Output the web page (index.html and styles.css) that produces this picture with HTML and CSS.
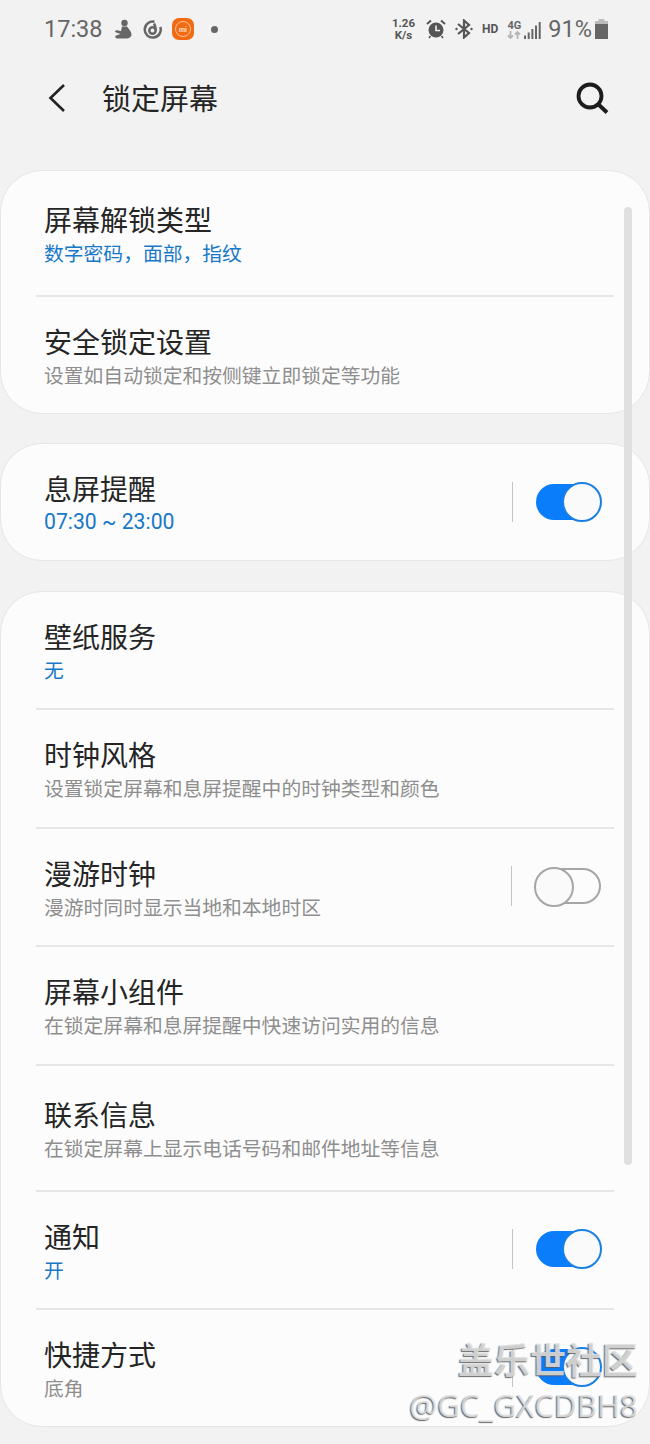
FILE: index.html
```html
<!DOCTYPE html>
<html lang="zh-CN">
<head>
  <meta charset="UTF-8" />
  <title>锁定屏幕</title>
  <meta name="viewport" content="width=device-width, initial-scale=1.0" />
  <link rel="stylesheet" href="styles.css">
</head>
<body>

  <!-- status bar -->
  <div class="status">
    <div class="status-left">
      <span class="clock">17:38</span>
      <svg class="ic-man" width="18" height="20" viewBox="0 0 18 20"><circle cx="10.500" cy="4" r="3.200" fill="#666"/><path d="M8 7.500 L13 7.500 C15 10.500 17.500 12.500 17.500 15.500 C17.500 18 15 19.500 12 19.500 L2.500 19.500 C1 18.500 1 17 2 16.500 L6.500 15 L1 13 C1 11.500 2.500 11 4 11.500 L7 12 Z" fill="#666"/></svg>
      <svg class="ic-swirl" width="19" height="19" viewBox="0 0 19 19" fill="none" stroke="#666" stroke-width="2.500"><path d="M11.500 1.800 A8 8 0 1 0 17.300 7"/><circle cx="9.500" cy="10.500" r="3.200"/><path d="M12.700 10.500 C12.700 7 12 5 11 3.500"/></svg>
      <svg class="ic-mi" width="22" height="22" viewBox="0 0 22 22"><rect width="22" height="22" rx="7" fill="#f26a12"/><circle cx="11" cy="11" r="7.500" fill="none" stroke="#f9c39b" stroke-width="1"/><text x="11" y="13.500" text-anchor="middle" class="mi-text">mi</text></svg>
      <span class="dot"></span>
    </div>
    <div class="status-right">
      <span class="speed">1.26<br>K/s</span>
      <svg class="ic-alarm" width="20" height="20" viewBox="0 0 20 20"><circle cx="10" cy="11" r="7.500" fill="#555"/><path d="M10 6.500 V11.500 H14" fill="none" stroke="#f2f2f2" stroke-width="1.600"/><path d="M1 5 L5 1.500 M19 5 L15 1.500" stroke="#555" stroke-width="2"/><path d="M4.500 17 L3 19 M15.500 17 L17 19" stroke="#555" stroke-width="1.600"/></svg>
      <svg class="ic-bt" width="18" height="20" viewBox="0 0 18 20" fill="none" stroke="#555" stroke-width="2.200"><path d="M3 5 L14 14 L9 18.500 V1.500 L14 6 L3 15"/><circle cx="1.500" cy="10" r="1.200" fill="#555" stroke="none"/><circle cx="16.500" cy="10" r="1.200" fill="#555" stroke="none"/></svg>
      <span class="hd">HD</span>
      <span class="net">4G<svg width="14" height="8" viewBox="0 0 14 8" fill="none" stroke-width="1.800"><path d="M3.500 0 V7 M1 4.500 L3.500 7 L6 4.500" stroke="#b5b5b5"/><path d="M10.500 8 V1 M8 3.500 L10.500 1 L13 3.500" stroke="#b5b5b5"/></svg></span>
      <svg class="ic-signal" width="17" height="17" viewBox="0 0 17 17" fill="#666"><rect x="0" y="13.500" width="2" height="3.500"/><rect x="3.700" y="10.500" width="2" height="6.500"/><rect x="7.400" y="7" width="2" height="10"/><rect x="11" y="3.500" width="2" height="13.500"/><rect x="14.700" y="0" width="2" height="17"/></svg>
      <span class="pct">91%</span>
      <svg class="ic-batt" width="13" height="20" viewBox="0 0 13 20"><rect x="3.500" y="0" width="6" height="2" fill="#bbb"/><rect x="0" y="2" width="13" height="4" fill="#bbb"/><rect x="0" y="5" width="13" height="15" fill="#666"/></svg>
    </div>
  </div>

  <!-- header -->
  <div class="appbar">
    <svg class="back" width="20" height="30" viewBox="0 0 20 30" fill="none" stroke="#222" stroke-width="2.600"><path d="M17 2 L3.500 15 L17 28"/></svg>
    <span class="appbar-title">锁定屏幕</span>
    <svg class="search" width="34" height="34" viewBox="0 0 34 34" fill="none" stroke="#1c1c1c" stroke-width="3.800"><circle cx="15" cy="15" r="11.500"/><path d="M23.500 23.500 L32 31.500"/></svg>
  </div>

  <div class="card card-first">
    <div class="row h-126">
      <div class="row-text">
        <div class="t">屏幕解锁类型</div>
        <div class="s blue">数字密码，面部，指纹</div>
      </div>
    </div>
    <div class="row row-last h-116">
      <div class="row-text">
        <div class="t">安全锁定设置</div>
        <div class="s">设置如自动锁定和按侧键立即锁定等功能</div>
      </div>
    </div>
  </div>

  <div class="card card-single">
    <div class="row row-last h-116">
      <div class="row-text">
        <div class="t">息屏提醒</div>
        <div class="s blue time">07:30 ~ 23:00</div>
      </div>
      <span class="vline"></span>
      <span class="toggle on"></span>
    </div>
  </div>

  <div class="card">
    <div class="row">
      <div class="row-text">
        <div class="t">壁纸服务</div>
        <div class="s blue">无</div>
      </div>
    </div>
    <div class="row h-119">
      <div class="row-text">
        <div class="t">时钟风格</div>
        <div class="s">设置锁定屏幕和息屏提醒中的时钟类型和颜色</div>
      </div>
    </div>
    <div class="row">
      <div class="row-text">
        <div class="t">漫游时钟</div>
        <div class="s">漫游时同时显示当地和本地时区</div>
      </div>
      <span class="vline"></span>
      <span class="toggle"></span>
    </div>
    <div class="row h-119">
      <div class="row-text">
        <div class="t">屏幕小组件</div>
        <div class="s">在锁定屏幕和息屏提醒中快速访问实用的信息</div>
      </div>
    </div>
    <div class="row h-126">
      <div class="row-text">
        <div class="t">联系信息</div>
        <div class="s">在锁定屏幕上显示电话号码和邮件地址等信息</div>
      </div>
    </div>
    <div class="row">
      <div class="row-text">
        <div class="t">通知</div>
        <div class="s blue">开</div>
      </div>
      <span class="vline"></span>
      <span class="toggle on"></span>
    </div>
    <div class="row row-last h-116">
      <div class="row-text">
        <div class="t">快捷方式</div>
        <div class="s">底角</div>
      </div>
      <span class="vline"></span>
      <span class="toggle on"></span>
    </div>
  </div>

  <div class="scrollbar"></div>

  <div class="watermark">
    <div class="wm-cn">盖乐世社区</div>
    <div class="wm-id">@GC_GXCDBH8</div>
  </div>

</body>
</html>
```

FILE: styles.css
```css
html, body {
  margin: 0;
  padding: 0;
}

body {
  position: relative;
  width: 650px;
  height: 1444px;
  overflow: hidden;
  background-color: #f2f2f2;
  color: #252525;
  font-family: "Noto Sans CJK SC", "Noto Sans", sans-serif;
}

/* status bar */
.status {
  display: flex;
  justify-content: space-between;
  align-items: center;
  height: 58px;
  padding: 0 42px 0 44px;
  color: #666;
  font-family: Roboto, sans-serif;
}

.status-left,
.status-right {
  display: flex;
  align-items: center;
}

.clock {
  font-size: 23.500px;
  margin-right: 11px;
}

.ic-swirl { margin-left: 11px; }
.ic-mi { margin-left: 10px; }

.mi-text {
  font-family: Roboto, sans-serif;
  font-size: 7px;
  font-weight: 700;
  fill: #fbe3d0;
}

.dot {
  width: 7px;
  height: 7px;
  margin-left: 17px;
  border-radius: 50%;
  background: #666;
}

.speed {
  margin-right: 2px;
  font-size: 11.500px;
  font-weight: 700;
  line-height: 12px;
  text-align: center;
  color: #555;
}

.ic-alarm { margin-left: 9px; }
.ic-bt { margin-left: 9px; }

.hd {
  margin-left: 9px;
  font-size: 12px;
  font-weight: 700;
  color: #555;
}

.net {
  display: flex;
  flex-direction: column;
  align-items: center;
  margin-left: 9px;
  font-size: 11px;
  font-weight: 700;
  line-height: 11px;
  color: #666;
}

.ic-signal { margin: 3px 0 0 3px; }

.pct {
  margin-left: 7px;
  font-size: 23.500px;
}

.ic-batt { margin-left: 3px; }

/* header */
.appbar {
  display: flex;
  align-items: center;
  height: 80px;
  padding: 0 41px 0 47px;
}

.appbar-title {
  flex: 1;
  margin: -2px 0 0 35px;
  font-size: 29px;
}

.back,
.search {
  flex: none;
}

/* cards */
.card {
  margin-bottom: 30px;
  border: 1px solid #e6e6e6;
  border-radius: 42px;
  background: #fcfcfc;
}

.card-first {
  margin-top: 32px;
  margin-bottom: 29px;
}

.row {
  display: flex;
  align-items: center;
  box-sizing: border-box;
  height: 118px;
  margin: 0 35px;
  padding: 0 13px 0 8px;
  border-bottom: 2px solid #e6e6e6;
}

.h-126 { height: 126px; }
.h-119 { height: 119px; }
.h-116 { height: 116px; }

.row-last {
  border-bottom: none;
}

.row-text {
  flex: 1;
  min-width: 0;
  padding-top: 3px;
}

.t {
  font-size: 28px;
  line-height: 36px;
}

.s {
  font-size: 19.800px;
  line-height: 32px;
  color: #8e8e8e;
}

.s.blue { color: #1878c8; }

.s.time {
  font-family: Roboto, sans-serif;
  font-size: 21.200px;
}

.vline {
  flex: none;
  width: 1px;
  height: 40px;
  margin: 0 23px 3px 0;
  background: #c4c4c4;
}

.toggle {
  position: relative;
  flex: none;
  box-sizing: border-box;
  width: 66px;
  height: 36px;
  margin-bottom: 3px;
  border: 2px solid #a6a6a6;
  border-radius: 18px;
}

.card-single .vline,
.card-single .toggle {
  margin-bottom: 0;
}

.toggle::after {
  content: "";
  position: absolute;
  top: -3px;
  left: -3px;
  box-sizing: border-box;
  width: 40px;
  height: 40px;
  border: 2px solid #a6a6a6;
  border-radius: 50%;
  background: #fafafa;
}

.toggle.on {
  width: 65px;
  border: none;
  background: #0a7dfa;
}

.toggle.on::after {
  top: -2px;
  left: 26px;
  border-color: #1a80e4;
}

/* overlays */
.scrollbar {
  position: absolute;
  left: 624px;
  top: 207px;
  width: 8px;
  height: 958px;
  border-radius: 4px;
  background: #e0e0e0;
}

.watermark {
  position: absolute;
  right: 12px;
  top: 1336px;
  text-align: right;
  color: rgba(226, 226, 226, 0.85);
  text-shadow: -1px 1px 1px rgba(90, 90, 90, 0.9);
}

.wm-cn {
  font-size: 36px;
  font-weight: 700;
  line-height: 44px;
}

.wm-id {
  margin-top: 5px;
  font-family: "Open Sans", sans-serif;
  font-size: 31.300px;
  line-height: 40px;
}
```
